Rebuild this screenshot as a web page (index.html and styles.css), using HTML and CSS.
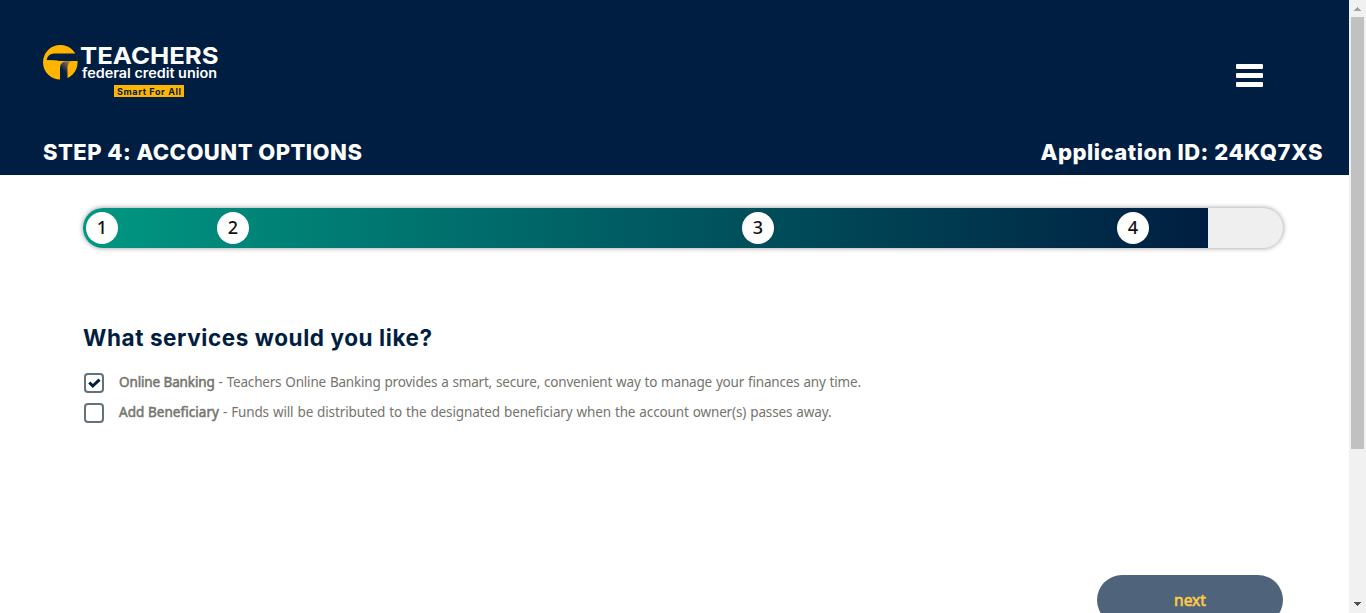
FILE: index.html
```html
<!DOCTYPE html>
<html lang="en">
<head>
<meta charset="utf-8">
<title>Account Options</title>
<link rel="stylesheet" href="styles.css">
</head>
<body>
<div class="page">
  <header class="header">
    <div class="brand-row">
      <svg class="logo" width="180" height="56" viewBox="0 0 180 56" role="img" aria-label="Teachers federal credit union">
        <defs>
          <linearGradient id="stem" x1="0.8" y1="0" x2="0.2" y2="1">
            <stop offset="0" stop-color="#c79326"/>
            <stop offset="0.2" stop-color="#6f6250"/>
            <stop offset="0.6" stop-color="#001e41"/>
          </linearGradient>
        </defs>
        <circle cx="18.300" cy="19.300" r="17.300" fill="#ffb400"/>
        <path d="M4.500 17Q6 10.500 12 10.500H34L36 18H17Q14 17 4.500 17Z" fill="#001e41"/>
        <path d="M18 37V25Q18 18 26 18H30Q25.500 19.500 25.500 25V36Q21 38 18 37Z" fill="url(#stem)"/>
        <text class="logo-name" x="38" y="20.500" textLength="138.500" lengthAdjust="spacingAndGlyphs">TEACHERS</text>
        <text class="logo-union" x="40" y="35" textLength="135" lengthAdjust="spacingAndGlyphs">federal credit union</text>
        <path d="M72 42H142V54H72Z" fill="#ffb400"/>
        <text class="logo-tag" x="75" y="51.500" textLength="64" lengthAdjust="spacing">Smart For All</text>
      </svg>
      <div class="menu"><span></span><span></span><span></span></div>
    </div>
    <div class="title-row">
      <h1 class="step-title">STEP 4: ACCOUNT OPTIONS</h1>
      <div class="app-id">Application ID: 24KQ7XS</div>
    </div>
  </header>
  <main class="main">
    <div class="progress">
      <div class="progress-fill">
        <span class="dot">1</span><span class="dot">2</span><span class="dot">3</span><span class="dot">4</span>
      </div>
    </div>
    <h2 class="question">What services would you like?</h2>
    <div class="option">
      <span class="box"><svg width="16" height="16" viewBox="0 0 16 16"><path d="M3.300 7.500L6.800 11L13.500 4.700" fill="none" stroke="#001e41" stroke-width="3"/></svg></span>
      <p class="label"><b class="name name-banking">Online Banking</b><span class="desc desc-banking"> - Teachers Online Banking provides a smart, secure, convenient way to manage your finances any time.</span></p>
    </div>
    <div class="option">
      <span class="box"></span>
      <p class="label"><b class="name">Add Beneficiary</b><span class="desc desc-beneficiary"> - Funds will be distributed to the designated beneficiary when the account owner(s) passes away.</span></p>
    </div>
    <button class="next">next</button>
  </main>
</div>
<div class="scrollbar">
  <svg width="17" height="17"><path d="M8 7h1v1h1v1h1v1h1v1H5v-1h1V9h1V8h1Z" fill="#a3a3a3"/></svg>
  <div class="thumb"></div>
  <svg width="17" height="17"><path d="M5 6h7v1h-1v1h-1v1H9v1H8V9H7V8H6V7H5Z" fill="#505050"/></svg>
</div>
</body>
</html>
```

FILE: styles.css
```css
* { box-sizing: border-box; }
body {
  margin: 0;
  display: flex;
  height: 613px;
  overflow: hidden;
  background: #fff;
  font-family: "Noto Sans", sans-serif;
}
.page { width: 1349px; height: 613px; overflow: hidden; }
.header { height: 175px; background: #001e41; color: #fff; }
.brand-row {
  display: flex;
  justify-content: space-between;
  height: 139px;
  padding: 43px 86px 0 42px;
}
.logo { overflow: visible; }
.logo-name { font: 700 23.5px Inter, sans-serif; fill: #fff; }
.logo-union { font: 600 13px Inter, sans-serif; fill: #fff; }
.logo-tag { font: 700 9px Inter, sans-serif; fill: #001e41; }
.menu { display: flex; flex-direction: column; gap: 4px; width: 27px; padding-top: 21px; }
.menu span { height: 5px; border-radius: 1px; background: #fff; }
.title-row {
  display: flex;
  justify-content: space-between;
  padding: 0 26px 0 43px;
  font: 800 22px/27px Inter, sans-serif;
  white-space: nowrap;
}
.step-title { margin: 0; font: inherit; letter-spacing: 0.46px; }
.app-id { letter-spacing: 0.51px; }
.main { display: flex; flex-direction: column; padding: 33px 66px 0 83px; }
.progress {
  width: 1200px;
  height: 40px;
  border-radius: 20px;
  background: #efefef;
  box-shadow: 0 0 4px 1px rgba(0, 0, 0, 0.3);
  overflow: hidden;
}
.progress-fill {
  display: grid;
  grid-template-columns: 131px 525px 375px 1fr;
  align-items: center;
  width: 1125px;
  height: 40px;
  padding-left: 3px;
  background: linear-gradient(to right, #009782, #001e41);
}
.dot {
  width: 32px;
  height: 32px;
  border-radius: 50%;
  background: #fff;
  color: #111;
  font-size: 18px;
  line-height: 31px;
  font-weight: 500;
  text-align: center;
}
.question {
  margin: 76px 0 21px;
  color: #001e41;
  font: 700 22.5px/28px Inter, sans-serif;
  letter-spacing: 0.58px;
}
.option { display: flex; gap: 15px; height: 30px; padding-left: 1px; }
.box {
  display: flex;
  width: 20px;
  height: 20px;
  border: 2px solid #63717a;
  border-radius: 4px;
}
.label { margin: 0; color: #74746d; font-size: 13.5px; line-height: 19px; white-space: pre; }
.name { font-weight: 400; letter-spacing: 0.05px; -webkit-text-stroke: 0.5px #74746d; }
.name-banking { letter-spacing: -0.12px; }
.desc { word-spacing: 0.6px; }
.desc-banking { letter-spacing: -0.19px; }
.desc-beneficiary { letter-spacing: -0.13px; }
.next {
  align-self: flex-end;
  width: 186px;
  height: 50px;
  margin-top: 142px;
  border: 0;
  border-radius: 25px;
  background: #4f637a;
  color: #ffcb45;
  font: 400 15.5px "Noto Sans", sans-serif;
  -webkit-text-stroke: 0.6px #ffcb45;
}
.scrollbar {
  display: flex;
  flex-direction: column;
  justify-content: space-between;
  width: 17px;
  height: 613px;
  background: #f1f1f1;
}
.scrollbar svg { display: block; flex: none; }
.thumb { width: 13px; height: 432px; margin: 0 2px auto; background: #c1c1c1; }
```
